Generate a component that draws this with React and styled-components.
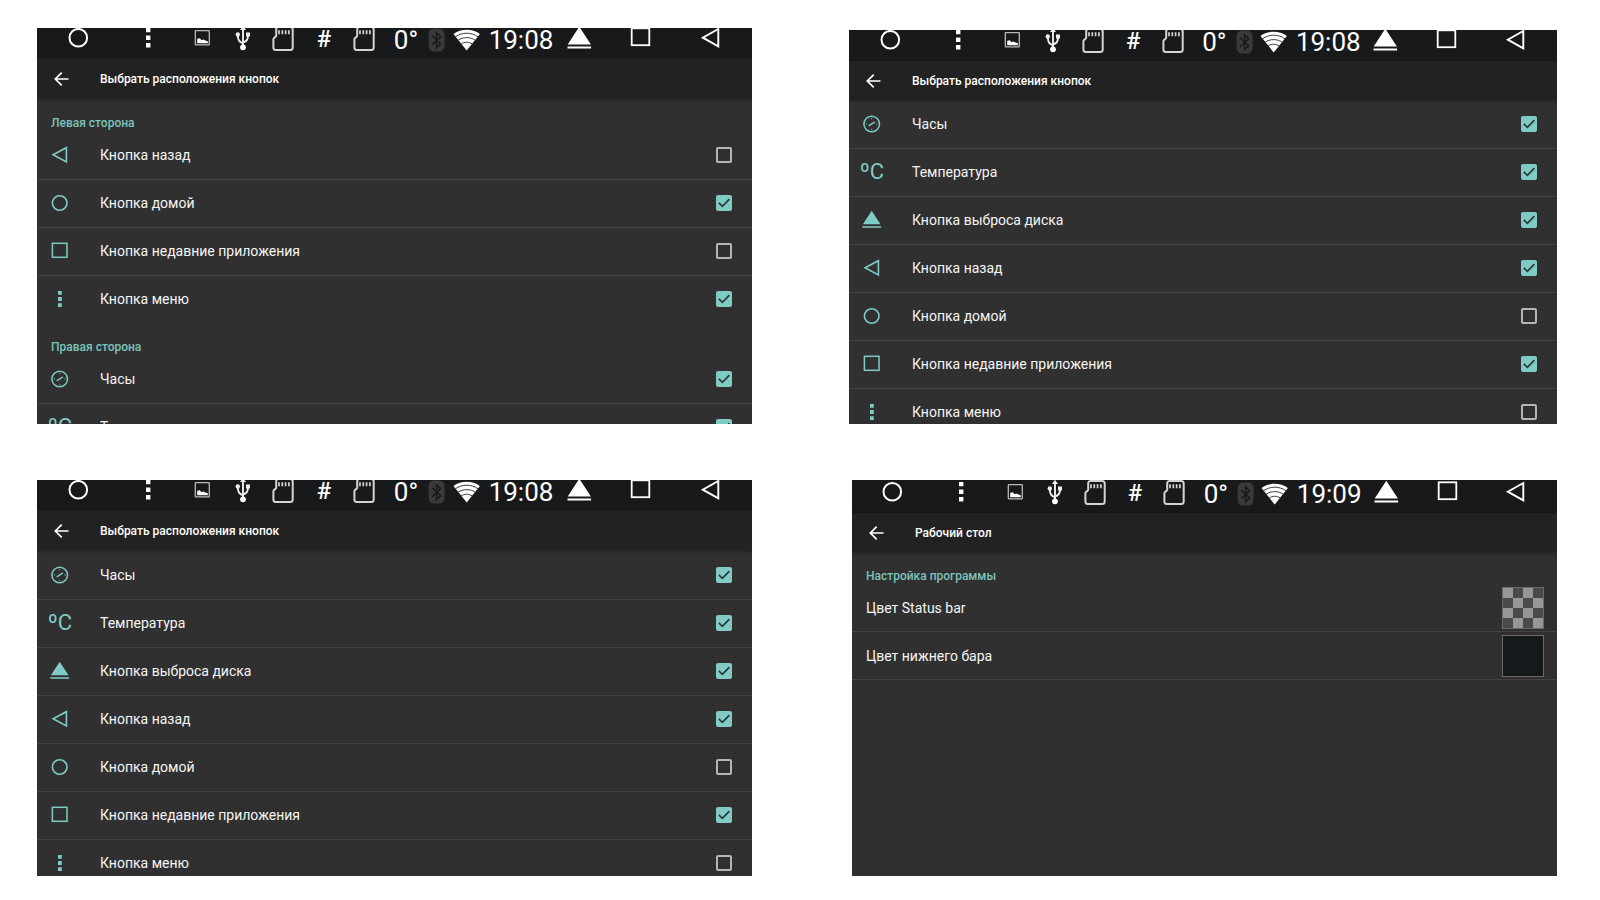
import React from 'react'
import styled, { createGlobalStyle } from 'styled-components'

const buttons = {
    clock: 'Часы',
    temp: 'Температура',
    eject: 'Кнопка выброса диска',
    back: 'Кнопка назад',
    home: 'Кнопка домой',
    recent: 'Кнопка недавние приложения',
    menu: 'Кнопка меню',
}

const leftSide = [['back', false], ['home', true], ['recent', false], ['menu', true]]
const rightSide = [
    ['clock', true],
    ['temp', true],
    ['eject', true],
    ['back', true],
    ['home', false],
    ['recent', true],
    ['menu', false],
]

/* ---------- status bar icons ---------- */

const StatusIcon = ({ children }) => (
    <StatusSvg viewBox="0 0 28 24" fill="none" stroke="#fff" aria-hidden="true">
        {children}
    </StatusSvg>
)

const HomeIcon = () => (
    <StatusIcon><circle cx="14.3" cy="10.7" r="8.8" strokeWidth="2" /></StatusIcon>
)

const DotsIcon = () => (
    <StatusIcon>
        <path d="M12 .9h4.4v4.4H12zM12 8.5h4.4v4.4H12zM12 16.1h4.4v4.4H12z" fill="#fff" stroke="none" />
    </StatusIcon>
)

const ImageIcon = () => (
    <StatusIcon>
        <rect x="7.3" y="3.7" width="14" height="14.2" rx=".6" stroke="#b9babb" strokeWidth="1.3" />
        <path d="M9.2 16.2v-4.4l2.6-.6 1.8 2 1.8-.8 2 1.2 2.4.6v2z" fill="#fff" stroke="none" />
    </StatusIcon>
)

const UsbIcon = () => (
    <StatusIcon>
        <path d="M14 2v18M14 16.500c-4-2-5.200-3.500-5.200-8.500M14 15.500c4-1.500 5-3 5-7.500" stroke="#eee" strokeWidth="1.900" />
        <path d="M14-1.200l3 4.200h-6zM17 5.500h4v4h-4z" fill="#eee" stroke="none" />
        <circle cx="8.800" cy="7.500" r="2.200" fill="#eee" stroke="none" />
        <circle cx="14" cy="20.300" r="2.900" fill="#fff" stroke="none" />
    </StatusIcon>
)

const SdIcon = () => (
    <StatusIcon>
        <path
            d="M9.500 0h11.900a2.300 2.300 0 0 1 2.300 2.300v18.200a2.500 2.500 0 0 1-2.500 2.500H6.900a2.500 2.500 0 0 1-2.500-2.500v-8.200q0-1 .8-1.500l1.200-.9q.8-.5.8-1.500V2.300A2.300 2.300 0 0 1 9.500 0z"
            stroke="#d4d4d4"
            strokeWidth="2"
        />
        <path d="M10 3.200v4M13.300 3.200v4M16.600 3.200v4M19.900 3.200v4" stroke="#d4d4d4" strokeWidth="1.700" />
    </StatusIcon>
)

const BluetoothIcon = () => (
    <StatusIcon>
        <rect x="4.600" y="1.500" width="16" height="23" rx="5.500" fill="#393a3b" stroke="none" />
        <path d="M8.100 8.700l8.500 8-4 4v-15l4 4-8.500 8" stroke="#17191b" strokeWidth="1.500" />
    </StatusIcon>
)

const WifiIcon = () => (
    <StatusIcon>
        <path d="M13.700 23.500L.5 7C8.200 1.400 19.200 1.400 26.900 7z" fill="#fff" stroke="none" />
        <path
            d="M2.400 9.800c6.600-4.800 16-4.800 22.600 0M5.100 13.300c5-3.600 12.200-3.600 17.200 0M8.100 17c3.400-2.300 7.800-2.300 11.200 0"
            stroke="#3a3c3e"
            strokeWidth="1"
        />
    </StatusIcon>
)

const EjectIcon = () => (
    <StatusIcon>
        <path d="M14.300-.3L25.900 17.600H2.700zM2.500 19.400h23.600v2H2.500z" fill="#fff" stroke="none" />
    </StatusIcon>
)

const RecentIcon = () => (
    <StatusIcon><rect x="5.700" y="1.300" width="17.600" height="16.900" strokeWidth="1.800" /></StatusIcon>
)

const BackIcon = () => (
    <StatusIcon><path d="M22.300 2v17.400L6.800 10.700z" strokeWidth="1.900" /></StatusIcon>
)

/* ---------- list icons ---------- */

const listShapes = {
    clock: (
        <>
            <circle cx="11.700" cy="12" r="7.800" strokeWidth="1.500" />
            <path d="M8.700 13.800l6.200-3.900" strokeWidth="1.400" />
            <path d="M11.700 6.300v1M11.700 16.700v1M6 12h1M16.400 12h1" strokeWidth="1" />
        </>
    ),
    eject: <path d="M11.700 2.700l8.800 13.500H2.900zM2.300 18.200h18.800v1.500H2.300z" fill="currentColor" stroke="none" />,
    back: <path d="M18.400 4.700v14.200L5.100 11.800z" strokeWidth="1.600" />,
    home: <circle cx="11.700" cy="12" r="7.300" strokeWidth="1.600" />,
    recent: <rect x="4.400" y="4.300" width="14.600" height="14" strokeWidth="1.500" />,
    menu: (
        <path
            d="M10 4h3.800v3.800H10zM10 10.100h3.800v3.800H10zM10 16.200h3.800v3.800H10z"
            fill="currentColor"
            stroke="none"
        />
    ),
}

const ListIcon = ({ name }) => {
    if (name === 'temp') return <Degrees aria-hidden="true">ºC</Degrees>
    return (
        <ListSvg viewBox="0 0 24 24" fill="none" stroke="currentColor" aria-hidden="true">
            {listShapes[name]}
        </ListSvg>
    )
}

/* ---------- parts ---------- */

function StatusBar({ time, height, shift }) {
    return (
        <Status $height={height} $shift={shift}>
            <NavButton aria-label="Домой"><HomeIcon /></NavButton>
            <NavButton aria-label="Меню"><DotsIcon /></NavButton>
            <ImageIcon />
            <UsbIcon />
            <SdIcon />
            <Hash>#</Hash>
            <SdIcon />
            <StatusText>0°</StatusText>
            <BluetoothIcon />
            <WifiIcon />
            <StatusText>{time}</StatusText>
            <NavButton aria-label="Извлечь"><EjectIcon /></NavButton>
            <NavButton aria-label="Недавние"><RecentIcon /></NavButton>
            <NavButton aria-label="Назад"><BackIcon /></NavButton>
        </Status>
    )
}

function Screen({ title, time = '19:08', ratio, inset, statusHeight = 30, titleHeight = 41, shift = 0, children }) {
    return (
        <Panel $ratio={ratio} $inset={inset}>
            <StatusBar time={time} height={statusHeight} shift={shift} />
            <TitleBar $height={titleHeight}>
                <BackButton aria-label="Назад">
                    <svg width="16" height="16" viewBox="0 0 16 16" fill="none" stroke="#fff" strokeWidth="1.700">
                        <path d="M14.500 8H1.500M7.700 1.600L1.300 8l6.400 6.400" />
                    </svg>
                </BackButton>
                <Title>{title}</Title>
            </TitleBar>
            {children}
        </Panel>
    )
}

function ButtonList({ items }) {
    return (
        <List>
            {items.map(([name, on]) => (
                <Row key={name}>
                    <IconCell><ListIcon name={name} /></IconCell>
                    <RowText>{buttons[name]}</RowText>
                    <CheckCell>
                        <Checkbox type="checkbox" defaultChecked={on} />
                        <Tick viewBox="0 0 16 16" aria-hidden="true">
                            <path d="M2.800 7.800l3.600 3.600 7-7.200" />
                        </Tick>
                    </CheckCell>
                </Row>
            ))}
        </List>
    )
}

function ColorRow({ label, checker }) {
    const id = React.useId()
    return (
        <SwatchRow>
            <RowText id={id}>{label}</RowText>
            <Swatch aria-labelledby={id} $checker={checker} />
        </SwatchRow>
    )
}

function App() {
    return (
        <>
            <GlobalStyle />
            <Page>
                <Screen title="Выбрать расположения кнопок" ratio="715 / 396">
                    <SectionTitle>Левая сторона</SectionTitle>
                    <ButtonList items={leftSide} />
                    <SectionTitle>Правая сторона</SectionTitle>
                    <ButtonList items={rightSide.slice(0, 2)} />
                </Screen>
                <Screen
                    title="Выбрать расположения кнопок"
                    ratio="708 / 394"
                    inset="2px 0 0 0"
                    statusHeight={31}
                    titleHeight={39}
                >
                    <ButtonList items={rightSide} />
                </Screen>
                <Screen title="Выбрать расположения кнопок" ratio="715 / 396">
                    <ButtonList items={rightSide} />
                </Screen>
                <Screen
                    title="Рабочий стол"
                    time="19:09"
                    ratio="705 / 396"
                    inset="0 0 0 3px"
                    statusHeight={33}
                    titleHeight={39}
                    shift={2}
                >
                    <SectionTitle>Настройка программы</SectionTitle>
                    <ColorRow label="Цвет Status bar" checker />
                    <ColorRow label="Цвет нижнего бара" />
                </Screen>
            </Page>
        </>
    )
}

export default App

const GlobalStyle = createGlobalStyle`
    *{
        box-sizing:border-box;
    }
    body{
        margin:0;
        background:#fff;
        font-family:Roboto, "Noto Sans", sans-serif;
    }
    button{
        border:0;
        padding:0;
        background:none;
        cursor:pointer;
    }
`

const Page = styled.main`
    display:grid;
    grid-template-columns:minmax(0, 715fr) minmax(0, 708fr);
    align-items:start;
    gap:56px 97px;
    padding:28px 43px 24px 37px;
`

const Panel = styled.section`
    display:flex;
    flex-direction:column;
    min-height:0;
    margin:${props => props.$inset || 0};
    aspect-ratio:${props => props.$ratio};
    overflow:hidden;
    background:#303030;
    color:#f5f5f5;

    > *{
        flex-shrink:0;
    }
`

const Status = styled.header`
    display:grid;
    grid-template-columns:
        minmax(0, 82fr) minmax(0, 57fr) minmax(0, 52fr) minmax(0, 30fr) minmax(0, 50fr)
        minmax(0, 32fr) minmax(0, 48fr) minmax(0, 36fr) minmax(0, 27fr) minmax(0, 31fr)
        minmax(0, 78fr) minmax(0, 37fr) minmax(0, 86fr) minmax(0, 53fr) minmax(0, 16fr);
    grid-template-rows:22px;
    align-items:center;
    justify-items:center;
    height:${props => props.$height}px;
    padding-top:${props => props.$shift}px;
    background:#17191b;
    color:#fff;
`

const StatusSvg = styled.svg`
    display:block;
    width:28px;
    height:24px;
    overflow:visible;
`

const NavButton = styled.button`
    display:flex;
`

const StatusText = styled.span`
    align-self:start;
    font-size:26px;
    line-height:24px;
    white-space:nowrap;
`

const Hash = styled.span`
    font-size:24px;
    line-height:22px;
    font-weight:500;
`

const TitleBar = styled.div`
    display:flex;
    align-items:center;
    height:${props => props.$height}px;
    padding-left:17px;
    background:#222;
    box-shadow:0 1px 3px rgba(0,0,0,0.3);
    z-index:1;
`

const BackButton = styled.button`
    display:flex;
    width:46px;
`

const Title = styled.h1`
    margin:0;
    font-size:12px;
    line-height:16px;
    font-weight:500;
    color:#fff;
`

const SectionTitle = styled.h2`
    height:32px;
    margin:0;
    padding:16px 14px 0;
    font-size:12px;
    line-height:16px;
    font-weight:500;
    color:#7cc3bb;
`

const List = styled.div`
    display:flex;
    flex-direction:column;
`

const Row = styled.label`
    display:flex;
    align-items:center;
    height:48px;
    padding:0 20px 0 11px;
    cursor:pointer;

    & + &{
        box-shadow:inset 0 1px #424242;
    }
`

const IconCell = styled.span`
    display:flex;
    justify-content:center;
    width:24px;
    margin-right:28px;
    color:#80cbc4;
`

const ListSvg = styled.svg`
    display:block;
    width:24px;
    height:24px;
`

const Degrees = styled.span`
    font-size:22px;
    line-height:24px;
    font-weight:400;
`

const RowText = styled.span`
    flex:1;
    font-size:14px;
    line-height:20px;
`

const CheckCell = styled.span`
    position:relative;
    display:flex;
    width:16px;
    height:16px;
`

const Checkbox = styled.input`
    appearance:none;
    width:16px;
    height:16px;
    margin:0;
    border:2px solid #b5b5b5;
    border-radius:2px;
    cursor:pointer;

    &:checked{
        border-color:#80cbc4;
        background:#80cbc4;
    }
    &:not(:checked) + svg{
        display:none;
    }
`

const Tick = styled.svg`
    position:absolute;
    inset:0;
    fill:none;
    stroke:#263c3a;
    stroke-width:1.7;
    pointer-events:none;
`

const SwatchRow = styled.div`
    display:flex;
    align-items:center;
    height:48px;
    padding:0 13px 0 14px;
    border-bottom:1px solid #424242;
`

const Swatch = styled.button`
    width:42px;
    height:42px;
    border:1px solid #6a6a6a;
    background:${props => props.$checker
        ? 'repeating-conic-gradient(#4a4a4a 0% 25%, #979797 0% 50%) 0 0 / 20px 20px'
        : '#14191c'};
`
